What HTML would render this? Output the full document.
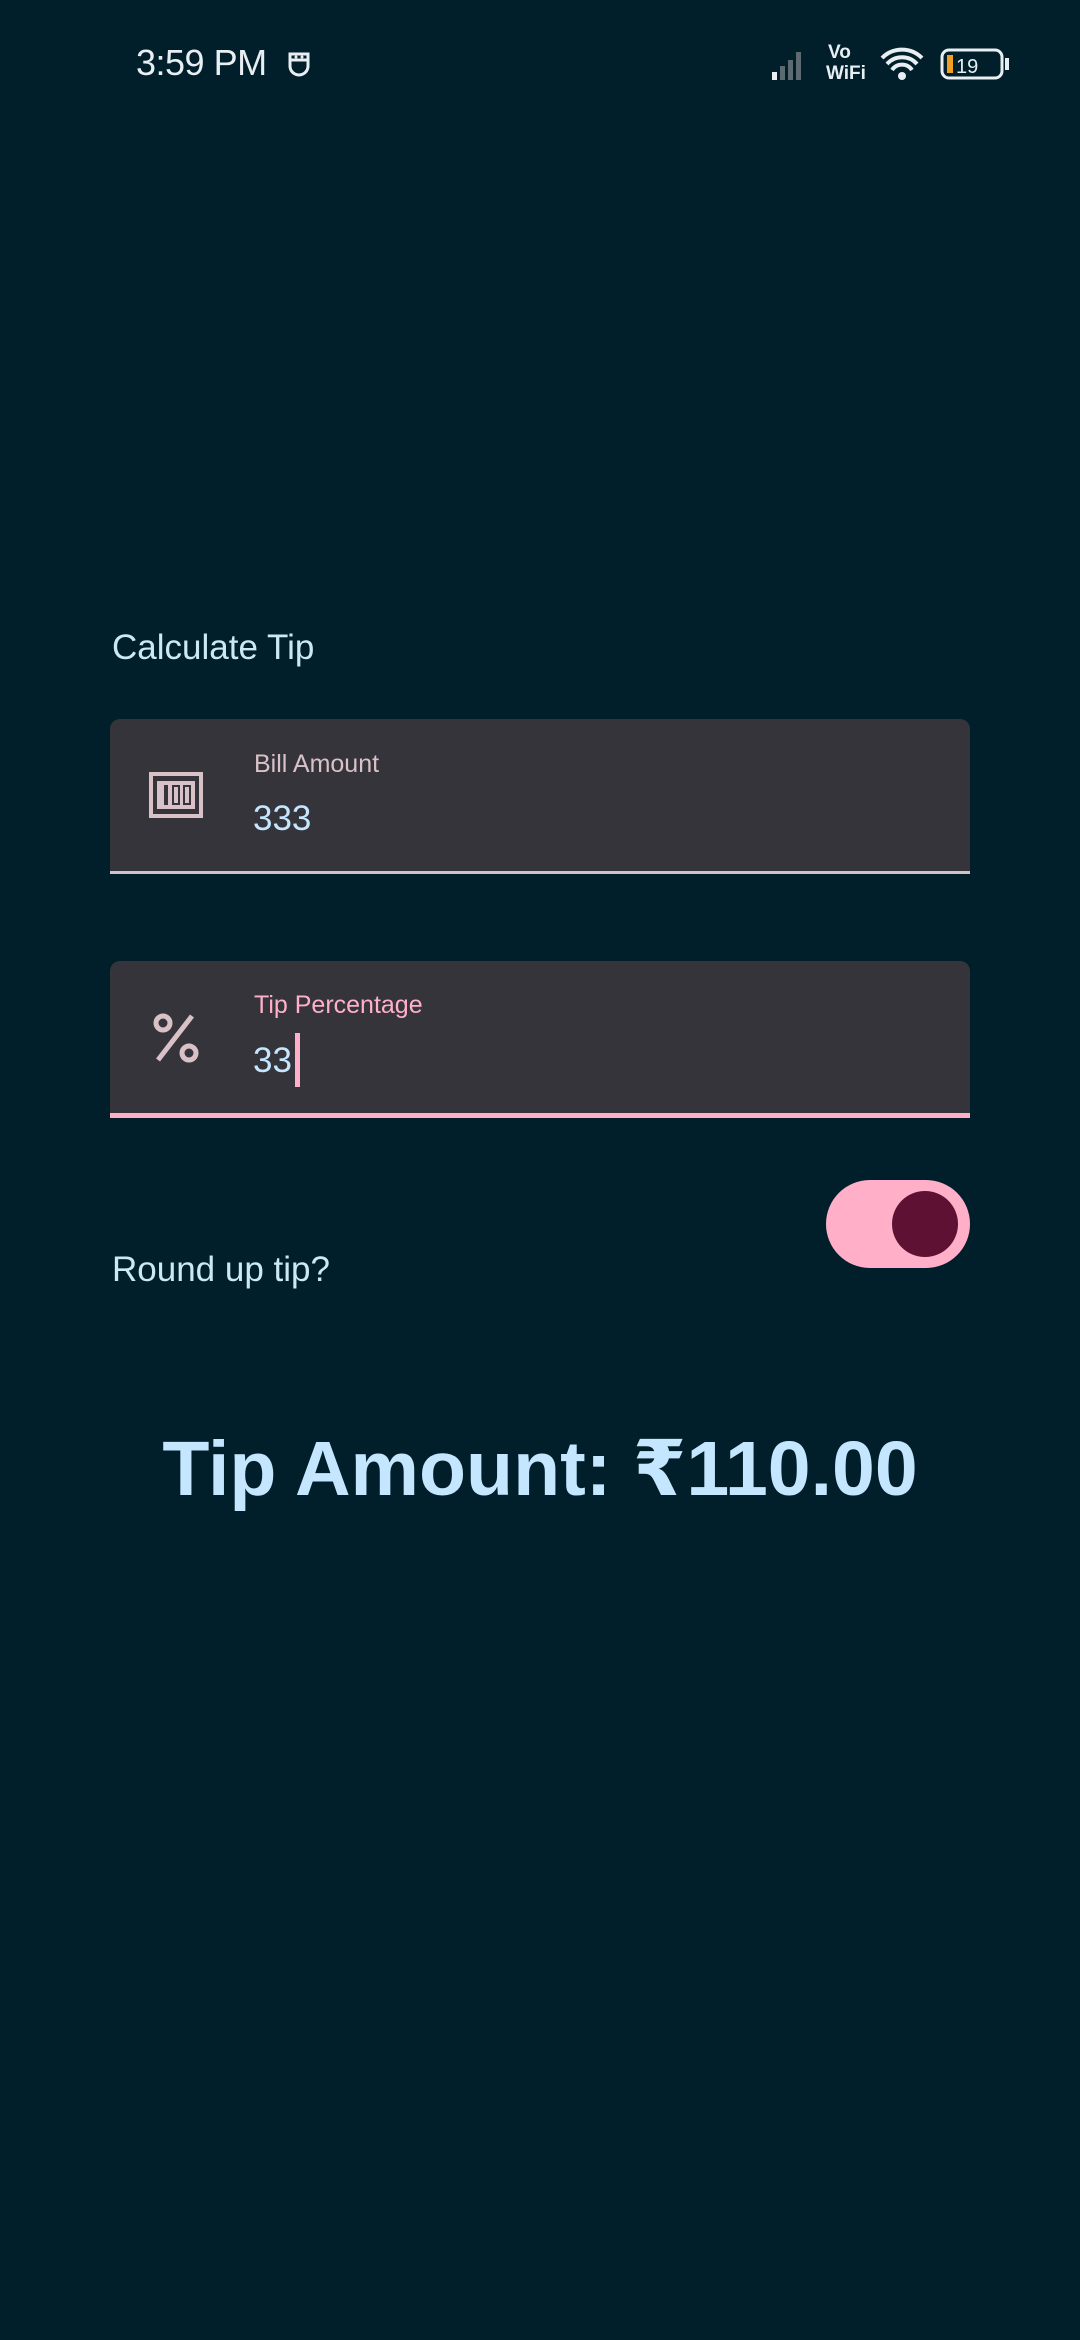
<!DOCTYPE html>
<html><head><meta charset="utf-8"><style>
body{margin:0;width:1080px;height:2340px;background:#001f2a;font-family:"Liberation Sans","DejaVu Sans",sans-serif;position:relative;overflow:hidden}
.a{position:absolute;white-space:nowrap}
.field{position:absolute;left:110px;width:860px;height:152px;background:#36343b;border-radius:10px 10px 0 0}
</style></head><body>
<div class="a" style="left:136px;top:42px;font-size:36px;color:#e8eef2;letter-spacing:-0.5px">3:59 PM</div>
<svg class="a" style="left:285px;top:46px" width="28" height="32" viewBox="0 0 28 32"><path d="M5 8h18v12a9 9 0 0 1-18 0z M5 14h18" fill="none" stroke="#e8eef2" stroke-width="3"/><circle cx="11" cy="11" r="1.5" fill="#e8eef2"/><circle cx="17" cy="11" r="1.5" fill="#e8eef2"/></svg>
<svg class="a" style="left:770px;top:40px" width="250" height="44" viewBox="0 0 250 44">
<rect x="2" y="32" width="5" height="8" fill="#e8eef2"/><rect x="10" y="26" width="5" height="14" fill="#5d6a70"/><rect x="18" y="20" width="5" height="20" fill="#5d6a70"/><rect x="26" y="12" width="5" height="28" fill="#5d6a70"/>
<text x="58" y="18" font-size="19" fill="#e8eef2" font-family="Liberation Sans" font-weight="bold">Vo</text><text x="56" y="39" font-size="19" fill="#e8eef2" font-family="Liberation Sans" font-weight="bold">WiFi</text>
<path d="M112 18a28 28 0 0 1 40 0M117 24a20 20 0 0 1 30 0M122 30a12 12 0 0 1 20 0" stroke="#e8eef2" stroke-width="4" fill="none"/><circle cx="132" cy="36" r="4" fill="#e8eef2"/>
<rect x="172" y="10" width="60" height="28" rx="7" fill="none" stroke="#e8eef2" stroke-width="3"/><rect x="177" y="15" width="6" height="18" fill="#f0a020"/><text x="186" y="33" font-size="20" fill="#e8eef2" font-family="Liberation Sans">19</text><rect x="235" y="18" width="4" height="12" fill="#e8eef2"/>
</svg>
<div class="a" style="left:112px;top:628px;font-size:35px;color:#cce8f4">Calculate Tip</div>
<div class="field" style="top:719px;border-bottom:3px solid #d0c2c8"></div>
<svg class="a" style="left:149px;top:772px" width="54" height="46" viewBox="0 0 54 46"><rect x="2" y="2" width="50" height="42" fill="none" stroke="#d8c2c8" stroke-width="4"/><rect x="8" y="9" width="38" height="28" fill="#d8c2c8"/><rect x="15" y="13" width="4" height="20" fill="#36343b"/><rect x="23" y="13" width="8" height="20" fill="#36343b" /><rect x="25" y="15" width="4" height="16" fill="#d8c2c8"/><rect x="34" y="13" width="8" height="20" fill="#36343b"/><rect x="36" y="15" width="4" height="16" fill="#d8c2c8"/></svg>
<div class="a" style="left:254px;top:750px;font-size:25px;color:#d8c2c8">Bill Amount</div>
<div class="a" style="left:253px;top:799px;font-size:35px;color:#c4e7ff">333</div>
<div class="field" style="top:961px;border-bottom:5px solid #ffb0c8"></div>
<svg class="a" style="left:152px;top:1012px" width="48" height="52" viewBox="0 0 48 52"><circle cx="11" cy="11" r="7" fill="none" stroke="#d8c2c8" stroke-width="5"/><circle cx="37" cy="41" r="7" fill="none" stroke="#d8c2c8" stroke-width="5"/><path d="M40 4L6 48" stroke="#d8c2c8" stroke-width="5"/></svg>
<div class="a" style="left:254px;top:991px;font-size:25px;color:#ffb0c8">Tip Percentage</div>
<div class="a" style="left:253px;top:1041px;font-size:35px;color:#c4e7ff">33</div>
<div class="a" style="left:295px;top:1033px;width:5px;height:54px;background:#ffb0c8"></div>
<div class="a" style="left:112px;top:1250px;font-size:35px;color:#cce8f4">Round up tip?</div>
<div class="a" style="left:826px;top:1180px;width:144px;height:88px;border-radius:44px;background:#ffb0c8"></div>
<div class="a" style="left:892px;top:1191px;width:66px;height:66px;border-radius:50%;background:#5e1133"></div>
<div class="a" style="left:0;width:1080px;text-align:center;top:1425px;font-size:77px;font-weight:bold;color:#c4e7ff">Tip Amount: ₹110.00</div>
</body></html>
